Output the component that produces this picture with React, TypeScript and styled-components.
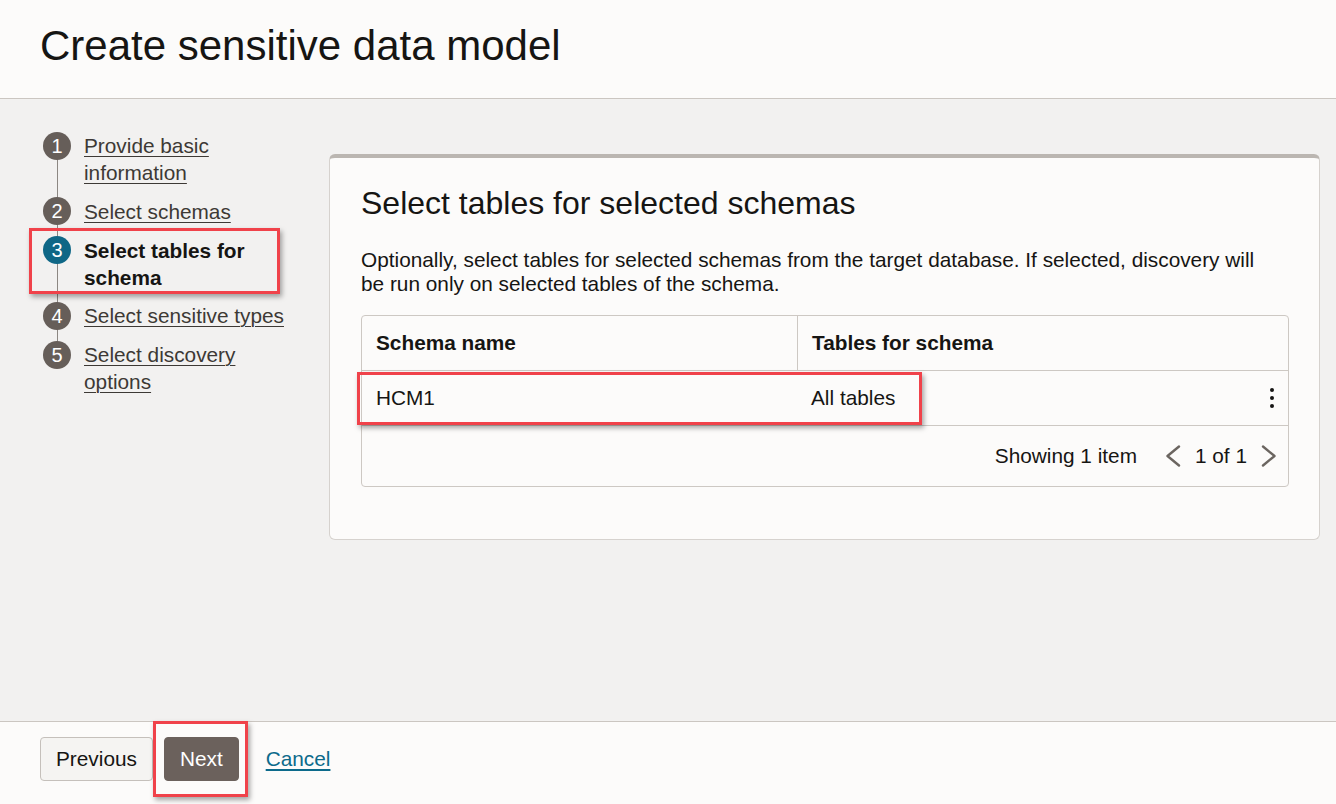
import React from "react";
import styled, { createGlobalStyle } from "styled-components";

const GlobalStyle = createGlobalStyle`
  html, body { margin: 0; padding: 0; }
  body {
    font-family: "Liberation Sans", Arial, sans-serif;
    color: #161513;
    background: #f2f1f0;
  }
  * { box-sizing: border-box; }
`;

const Page = styled.div`
  display: flex;
  flex-direction: column;
  height: 804px;
  background: #f2f1f0;
`;

const Header = styled.header`
  flex: none;
  height: 99px;
  padding: 21px 0 0 40px;
  background: #fcfbfa;
  border-bottom: 1px solid #cbc6c1;
`;

const Title = styled.h1`
  margin: 0;
  font-size: 42px;
  line-height: 50px;
  font-weight: 400;
  color: #161513;
`;

const Main = styled.main`
  flex: 1;
  display: flex;
  align-items: flex-start;
  gap: 30px;
  padding: 33px 16px 0 43px;
`;

const StepList = styled.ol`
  position: relative;
  list-style: none;
  margin: 0;
  padding: 0;
  width: 256px;
  flex: none;
  display: flex;
  flex-direction: column;
  gap: 11.5px;

  &::before {
    content: "";
    position: absolute;
    left: 13.5px;
    top: 14px;
    bottom: 40px;
    width: 1px;
    background: #8c8782;
  }
`;

const Step = styled.li`
  position: relative;
  display: flex;
  align-items: flex-start;
  gap: 13px;
`;

const Badge = styled.span<{ $active?: boolean }>`
  position: relative;
  flex: none;
  width: 28px;
  height: 28px;
  margin-top: -0.5px;
  border-radius: 50%;
  background: ${(p) => (p.$active ? "#0f6786" : "#665e59")};
  color: #ffffff;
  font-size: 20px;
  line-height: 28px;
  text-align: center;
`;

const StepLabel = styled.a<{ $active?: boolean }>`
  font-size: 20.8px;
  line-height: 27px;
  color: ${(p) => (p.$active ? "#161513" : "#3d3935")};
  font-weight: ${(p) => (p.$active ? 700 : 400)};
  text-decoration: ${(p) => (p.$active ? "none" : "underline")};
  text-underline-offset: 3px;
  text-decoration-thickness: 1px;
  cursor: pointer;
`;

const Highlight = styled.div<{ $top: number; $left: number; $w: number; $h: number }>`
  position: absolute;
  top: ${(p) => p.$top}px;
  left: ${(p) => p.$left}px;
  width: ${(p) => p.$w}px;
  height: ${(p) => p.$h}px;
  border: 3.5px solid #f0424a;
  box-shadow: 2px 3px 5px rgba(0, 0, 0, 0.35);
  pointer-events: none;
  z-index: 2;
`;

const Card = styled.section`
  flex: 1;
  margin-top: 22px;
  background: #fcfbfa;
  border: 1px solid #d6d2ce;
  border-top: 4px solid #bbb6b1;
  border-radius: 6px;
  padding: 26px 30px 52px 31px;
`;

const CardTitle = styled.h2`
  margin: 0;
  font-size: 32px;
  line-height: 38.4px;
  font-weight: 400;
`;

const Description = styled.p`
  max-width: 910px;
  margin: 26px 0 19px;
  font-size: 20.8px;
  line-height: 24px;
`;

const Table = styled.div`
  border: 1px solid #cdc8c3;
  border-radius: 4px;
  font-size: 20.8px;
  line-height: 24px;
`;

const HeaderRow = styled.div`
  display: grid;
  grid-template-columns: 435px 1fr;
  height: 55px;
  border-bottom: 1px solid #cdc8c3;
`;

const HeaderCell = styled.div<{ $divider?: boolean }>`
  display: flex;
  align-items: center;
  padding: 0 14px;
  font-weight: 700;
  border-left: ${(p) => (p.$divider ? "1px solid #cdc8c3" : "none")};
`;

const DataRow = styled.div`
  position: relative;
  display: grid;
  grid-template-columns: 435px 1fr auto;
  height: 55px;
  border-bottom: 1px solid #cdc8c3;
`;

const Cell = styled.div`
  display: flex;
  align-items: center;
  padding: 0 14px;
`;

const KebabCell = styled.div`
  display: flex;
  align-items: center;
  padding: 0 14px 0 0;
`;

const TableFooter = styled.div`
  height: 60px;
  display: flex;
  align-items: center;
  justify-content: flex-end;
  gap: 28px;
  padding: 0 11px 0 0;
`;

const Pager = styled.div`
  display: flex;
  align-items: center;
  gap: 14px;
`;

const Footer = styled.footer`
  flex: none;
  height: 83px;
  display: flex;
  align-items: flex-start;
  gap: 11px;
  padding: 15px 0 0 40px;
  background: #fcfbfa;
  border-top: 1px solid #cbc6c1;
`;

const Button = styled.button<{ $primary?: boolean }>`
  height: 44px;
  padding: 0 15px;
  border-radius: 4px;
  font-family: "Liberation Sans", Arial, sans-serif;
  font-size: 20.8px;
  border: 1px solid ${(p) => (p.$primary ? "#6b615c" : "#c5c0bb")};
  background: ${(p) => (p.$primary ? "#6b615c" : "#f5f4f2")};
  color: ${(p) => (p.$primary ? "#ffffff" : "#161513")};
  cursor: pointer;
`;

const ButtonWrap = styled.span`
  position: relative;
  display: inline-flex;
`;

const CancelLink = styled.a`
  margin-left: 16px;
  font-size: 20.8px;
  line-height: 44px;
  color: #0c6a8b;
  text-decoration: underline;
  text-underline-offset: 3px;
  cursor: pointer;
`;

const Chevron = ({ dir }: { dir: "left" | "right" }) => (
  <svg width="16" height="22" viewBox="0 0 16 22" aria-hidden="true">
    <polyline
      points={dir === "left" ? "14,1.5 2.5,11 14,20.5" : "2,1.5 13.5,11 2,20.5"}
      fill="none"
      stroke="#6b6560"
      strokeWidth="2.4"
      strokeLinecap="round"
      strokeLinejoin="round"
    />
  </svg>
);

const Kebab = () => (
  <svg width="4" height="20" viewBox="0 0 4 20" aria-hidden="true">
    <circle cx="2" cy="2" r="2" fill="#161513" />
    <circle cx="2" cy="10" r="2" fill="#161513" />
    <circle cx="2" cy="18" r="2" fill="#161513" />
  </svg>
);

const steps = [
  { n: 1, label: "Provide basic information" },
  { n: 2, label: "Select schemas" },
  { n: 3, label: "Select tables for schema", active: true },
  { n: 4, label: "Select sensitive types" },
  { n: 5, label: "Select discovery options" },
];

export default function App() {
  return (
    <>
      <GlobalStyle />
      <Page>
        <Header>
          <Title>Create sensitive data model</Title>
        </Header>
        <Main>
          <StepList>
            {steps.map((s) => (
              <Step key={s.n}>
                <Badge $active={s.active}>{s.n}</Badge>
                <StepLabel $active={s.active}>{s.label}</StepLabel>
                {s.active && <Highlight $top={-9} $left={-14} $w={251} $h={66} />}
              </Step>
            ))}
          </StepList>
          <Card>
            <CardTitle>Select tables for selected schemas</CardTitle>
            <Description>
              Optionally, select tables for selected schemas from the target database. If selected,
              discovery will be run only on selected tables of the schema.
            </Description>
            <Table>
              <HeaderRow>
                <HeaderCell>Schema name</HeaderCell>
                <HeaderCell $divider>Tables for schema</HeaderCell>
              </HeaderRow>
              <DataRow>
                <Cell>HCM1</Cell>
                <Cell>All tables</Cell>
                <KebabCell>
                  <Kebab />
                </KebabCell>
                <Highlight $top={1} $left={-5} $w={565} $h={53} />
              </DataRow>
              <TableFooter>
                <span>Showing 1 item</span>
                <Pager>
                  <Chevron dir="left" />
                  <span>1 of 1</span>
                  <Chevron dir="right" />
                </Pager>
              </TableFooter>
            </Table>
          </Card>
        </Main>
        <Footer>
          <Button>Previous</Button>
          <ButtonWrap>
            <Button $primary>Next</Button>
            <Highlight $top={-16} $left={-11} $w={95} $h={76} />
          </ButtonWrap>
          <CancelLink>Cancel</CancelLink>
        </Footer>
      </Page>
    </>
  );
}
